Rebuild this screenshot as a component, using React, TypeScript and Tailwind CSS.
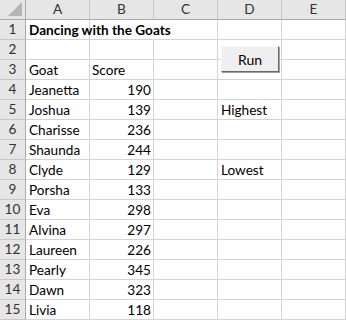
import { Fragment } from "react";

const cols = ["A", "B", "C", "D", "E"];

type Row = { a?: string; b?: string; d?: string; bold?: boolean };

const rows: Row[] = [
  { a: "Dancing with the Goats", bold: true },
  {},
  { a: "Goat", b: "Score" },
  { a: "Jeanetta", b: "190" },
  { a: "Joshua", b: "139", d: "Highest" },
  { a: "Charisse", b: "236" },
  { a: "Shaunda", b: "244" },
  { a: "Clyde", b: "129", d: "Lowest" },
  { a: "Porsha", b: "133" },
  { a: "Eva", b: "298" },
  { a: "Alvina", b: "297" },
  { a: "Laureen", b: "226" },
  { a: "Pearly", b: "345" },
  { a: "Dawn", b: "323" },
  { a: "Livia", b: "118" },
];

const isNum = (s?: string) => !!s && /^\d+$/.test(s);

export default function App() {
  return (
    <div className="relative w-[346px] h-[320px] bg-white overflow-hidden text-[13.6px] text-black" style={{ fontFamily: "Lato, 'Noto Sans', sans-serif" }}>
      <div className="grid grid-cols-[26px_repeat(5,64px)] grid-rows-[repeat(16,20px)]">
        {/* header row */}
        <div className="relative bg-[#e6e6e6] border-r border-b border-[#ababab]">
          <div className="absolute right-[3px] bottom-[3px] w-0 h-0 border-l-[14px] border-l-transparent border-b-[14px] border-b-[#b4b4b4]" />
        </div>
        {cols.map((c) => (
          <div key={c} className="bg-[#e6e6e6] border-r border-r-[#c6c6c6] border-b border-b-[#ababab] flex items-center justify-center text-[#333]">
            {c}
          </div>
        ))}
        {rows.map((r, i) => (
          <Fragment key={i}>
            <div className="bg-[#e6e6e6] border-r border-r-[#ababab] border-b border-b-[#c6c6c6] flex items-center justify-center text-[#333]">
              {i + 1}
            </div>
            <div className={`border-r border-b border-[#d4d4d4] flex items-center pl-[3px] pt-px whitespace-nowrap ${r.a ? "z-10" : ""} ${r.bold ? "font-bold" : ""}`}>
              {r.a}
            </div>
            <div className={`border-r border-b border-[#d4d4d4] flex items-center px-[2px] pt-px ${isNum(r.b) ? "justify-end" : "justify-start"} ${i === 0 ? "border-r-transparent" : ""}`}>
              {r.b}
            </div>
            <div className="border-r border-b border-[#d4d4d4]" />
            <div className="border-r border-b border-[#d4d4d4] flex items-center pl-[3px] pt-px">
              {r.d}
            </div>
            <div className="border-r border-b border-[#d4d4d4]" />
          </Fragment>
        ))}
      </div>
      <button className="absolute left-[221px] top-[46px] w-[58px] h-[26px] bg-[#efefef] border border-t-[#f8f8f8] border-l-[#f8f8f8] border-r-[#6b6b6b] border-b-[#6b6b6b] shadow-[1px_1px_0_#a0a0a0] flex items-center justify-center text-[14px]">
        Run
      </button>
    </div>
  );
}
